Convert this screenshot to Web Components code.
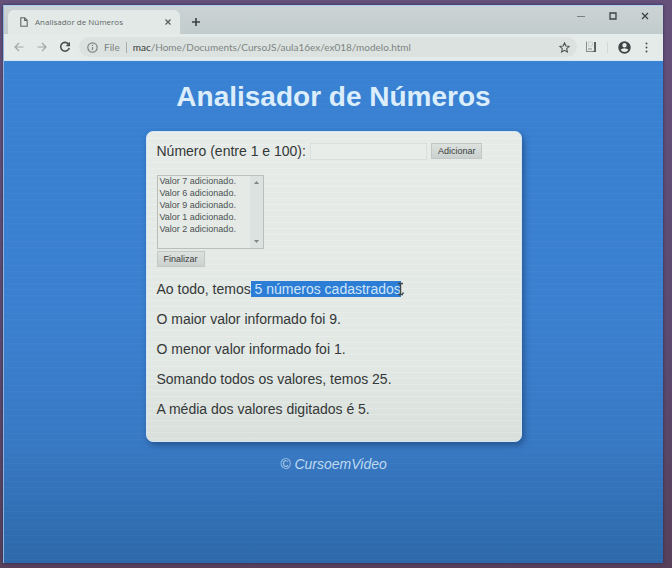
<!DOCTYPE html>
<html lang="pt-BR">
<head>
<meta charset="utf-8">
<meta name="viewport" content="width=device-width, initial-scale=1">
<title>Analisador de Números</title>
<style>
  html, body { height: 100%; margin: 0; }
  body {
    box-sizing: border-box;
    min-height: 100vh;
    padding: 5px 9px 5px 3px;
    background: linear-gradient(#66517b, #5c4a70 60%, #57405a);
    font-family: "Liberation Sans", Arial, sans-serif;
  }
</style>
</head>
<body>
<browser-window>
  <tab-strip slot="chrome"><browser-tab>Analisador de Números</browser-tab></tab-strip>
  <address-bar slot="chrome" host="mac" path="/Home/Documents/CursoJS/aula16ex/ex018/modelo.html"></address-bar>
  <number-page>
    <span slot="title">Analisador de Números</span>
    <number-form></number-form>
    <result-list></result-list>
    <span slot="footer">© CursoemVideo</span>
  </number-page>
</browser-window>

<script>
const define = (name, html) => {
  const template = document.createElement('template');
  template.innerHTML = html;
  customElements.define(name, class extends HTMLElement {
    constructor() {
      super();
      this.attachShadow({ mode: 'open' }).append(template.content.cloneNode(true));
    }
    connectedCallback() {
      for (const node of this.shadowRoot.querySelectorAll('[data-attr]')) {
        node.textContent = this.getAttribute(node.dataset.attr);
      }
    }
  });
};

define('browser-window', `
  <style>
    :host { display: flex; flex-direction: column; box-sizing: border-box; min-height: 100%;
      border-top: 1px solid #a9cdf2; border-left: 1px solid #8fb3dc;
      box-shadow: 0 0 3px #2b3052; }
    slot:not([name]) { display: flex; flex-direction: column; flex: 1; }
  </style>
  <slot name="chrome"></slot>
  <slot></slot>`);

define('tab-strip', `
  <style>
    :host { display: flex; align-items: stretch; height: 28px; background: linear-gradient(#cbd3d4, #c3cccc); }
    .tabs { display: flex; align-items: flex-end; padding-left: 4px; }
    button { border: 0; padding: 0; background: none; color: #3c4142; display: grid; place-items: center; }
    .add { width: 32px; padding-top: 4px; }
    .controls { display: flex; margin-left: auto; padding-right: 2px; height: 20px; }
    .controls button { width: 32px; }
    svg { display: block; fill: none; stroke: currentColor; }
  </style>
  <div class="tabs"><slot></slot></div>
  <button class="add" aria-label="Nova guia"><svg width="10" height="10" viewBox="0 0 10 10" stroke-width="1.6"><path d="M5 1v8M1 5h8"/></svg></button>
  <div class="controls">
    <button aria-label="Minimizar"><svg width="8" height="8" viewBox="0 0 8 8"><path d="M0 4.5h8" stroke="#798081"/></svg></button>
    <button aria-label="Maximizar"><svg width="8" height="8" viewBox="0 0 8 8" stroke-width="1.3"><path d="M1 1h6v6H1z"/></svg></button>
    <button aria-label="Fechar"><svg width="8" height="8" viewBox="0 0 8 8" stroke-width="1.3"><path d="M1 1l6 6M7 1L1 7"/></svg></button>
  </div>`);

define('browser-tab', `
  <style>
    :host { display: flex; align-items: center; box-sizing: border-box; width: 172px; height: 24px;
      padding: 0 9px 0 12px; gap: 7px; border-radius: 6px 6px 0 0; background: #e3e9e7;
      font: 8px/12px "Open Sans", "Noto Sans", sans-serif; color: #606768; }
    .name { flex: 1; white-space: nowrap; }
    button { border: 0; padding: 0; background: none; color: #555b5c; }
    svg { display: block; fill: none; stroke: currentColor; }
  </style>
  <svg width="8" height="10" viewBox="0 0 8 10" stroke-width="1.1"><path d="M.8.7h3.9l2.5 2.5v6.1H.8zM4.6.8v2.6h2.5"/></svg>
  <span class="name"><slot></slot></span>
  <button aria-label="Fechar guia"><svg width="6" height="6" viewBox="0 0 6 6" stroke-width="1.2"><path d="M.5.5l5 5M5.5.5l-5 5"/></svg></button>`);

define('address-bar', `
  <style>
    :host { display: flex; align-items: center; box-sizing: border-box; height: 27px; padding: 0 11px 0 7px;
      gap: 6px; background: #e5ebe8; border-bottom: 1px solid #d4e6f4;
      font: 10px/14px Lato, "Open Sans", sans-serif; color: #7d8583; }
    button { border: 0; padding: 0; background: none; color: #4a5051; display: grid; place-items: center; width: 16px; height: 16px; }
    button.off { color: #a1a8a8; }
    .nav { display: flex; gap: 7px; }
    .box { display: flex; align-items: center; flex: 1; height: 20px; padding: 0 5px 0 8px; border-radius: 10px; background: #dce2df; gap: 6px; min-width: 0; }
    .url { flex: 1; white-space: nowrap; overflow: hidden; }
    .sep { width: 1px; height: 11px; background: #a6aeac; }
    b { font-weight: 400; color: #343a39; }
    .tools { display: flex; align-items: center; gap: 8px; }
    .more { width: 12px; }
    svg { display: block; fill: none; stroke: currentColor; flex: none; }
    .fill { fill: currentColor; stroke: none; }
  </style>
  <div class="nav">
    <button class="off" aria-label="Voltar"><svg width="10" height="10" viewBox="0 0 10 10" stroke-width="1.2"><path d="M9.5 5H1M5 1L1 5l4 4"/></svg></button>
    <button class="off" aria-label="Avançar"><svg width="10" height="10" viewBox="0 0 10 10" stroke-width="1.2"><path d="M.5 5H9M5 1l4 4-4 4"/></svg></button>
    <button aria-label="Recarregar"><svg width="12" height="12" viewBox="0 0 12 12" stroke-width="1.6"><path d="M9.7 3.3A4.4 4.4 0 1 0 10.3 7"/><path d="M11 .8v4.4H6.6z" fill="currentColor" stroke="none"/></svg></button>
  </div>
  <div class="box">
    <svg width="11" height="11" viewBox="0 0 11 11" stroke-width="1.2"><circle cx="5.5" cy="5.5" r="4.7"/><path d="M5.5 5v3M5.5 2.7v1.2"/></svg>
    <span>File</span><span class="sep"></span>
    <span class="url"><b data-attr="host"></b><span data-attr="path"></span></span>
    <button aria-label="Favoritar"><svg width="11" height="11" viewBox="0 0 12 12" stroke-width="1.1"><path d="M6 .9l1.5 3.4 3.7.4-2.8 2.5.8 3.7L6 9l-3.2 1.9.8-3.7L.8 4.7l3.7-.4z"/></svg></button>
  </div>
  <div class="tools">
    <button aria-label="Extensão"><svg width="12" height="12" viewBox="0 0 12 12"><path d="M1.5.5v10M1 10.5h10" stroke="#868d8d"/><path d="M3.5 1h4v4h-4z" stroke="#ccd2d1"/><path d="M11 1v10H7q3-1 2-4V1z" fill="#596060" stroke="none"/><path d="M3 8h4" stroke="#868d8d"/></svg></button>
    <span class="sep" style="background:#d1d8d5"></span>
    <button aria-label="Perfil"><svg class="fill" width="13" height="13" viewBox="0 0 13 13"><path fill="#3e4445" fill-rule="evenodd" d="M6.5.3a6.2 6.2 0 1 0 0 12.4A6.2 6.2 0 0 0 6.5.3zm0 1.7a2.2 2.2 0 1 1 0 4.4 2.2 2.2 0 0 1 0-4.4zM2.5 8.800Q4 7.200 6.500 7.200t4 1.600Q9 11.100 6.500 11.100T2.500 8.800z"/></svg></button>
    <button class="more" aria-label="Menu"><svg class="fill" width="3" height="11" viewBox="0 0 3 11"><circle cx="1.5" cy="1.5" r="1"/><circle cx="1.5" cy="5.5" r="1"/><circle cx="1.5" cy="9.5" r="1"/></svg></button>
  </div>`);

define('number-page', `
  <style>
    :host { display: flex; flex-direction: column; align-items: center; flex: 1; box-sizing: border-box; padding: 19px 8px 8px;
      background: repeating-linear-gradient(#ffffff06 0 1px, transparent 1px 6px), linear-gradient(#3981d3, #3b80d0 50%, #3879c4 76%, #2d69aa); }
    h1 { margin: 0 0 18px; font-size: 28px; line-height: 33px; color: #dceefb; text-align: center; }
    main { box-sizing: border-box; width: 100%; max-width: 376px; padding: 10px; border-radius: 7px;
      background: repeating-linear-gradient(#ffffff30 0 1px, transparent 1px 6px), linear-gradient(#e6ebe8, #e2e8e4 75%, #d9dfda);
      border: 1px solid #d2e7f3; box-shadow: 2px 3px 6px #183d6ca0; }
    footer { margin-top: 14px; font-size: 14px; line-height: 17px; font-style: italic; color: #bfd9f0; }
  </style>
  <h1><slot name="title"></slot></h1>
  <main><slot></slot></main>
  <footer><slot name="footer"></slot></footer>`);

define('number-form', `
  <style>
    :host { display: block; font-size: 14px; line-height: 18px; color: #343838; }
    form { display: flex; flex-direction: column; align-items: flex-start; }
    .row { display: flex; align-items: center; gap: 4px; margin-bottom: 15px; }
    label { white-space: nowrap; }
    input { box-sizing: border-box; width: 117px; height: 17px; padding: 1px 2px; border: 1px solid #d9dfdc; background: #e8edea; font: 9px/12px "Liberation Sans", Arial, sans-serif; }
    button { box-sizing: border-box; height: 16px; padding: 0 6px; border: 1px solid #c2c8c5; background: linear-gradient(#dde2df, #cbd1ce);
      font: 9px/12px "Liberation Sans", Arial, sans-serif; color: #3c4040; }
    .list { display: flex; border: 1px solid #b9c0bc; margin-bottom: 2px; }
    select { box-sizing: border-box; width: 92px; height: 72px; margin: 0; padding: 0; border: 0; border-radius: 0; outline: 0; overflow: hidden;
      background: #e5eae7; color: #4b5150; font: 9px/12px "Liberation Sans", Arial, sans-serif; }
    option { min-height: 12px; padding: 0 2px; line-height: 12px; }
    .bar { display: flex; flex-direction: column; justify-content: space-between; width: 13px; padding: 5px 0; box-sizing: border-box; background: #dce2df; align-items: center; }
    svg { display: block; fill: #7f8684; }
  </style>
  <form onsubmit="return false">
    <div class="row">
      <label for="num">Número (entre 1 e 100):</label>
      <input id="num" type="text" inputmode="numeric">
      <button type="button">Adicionar</button>
    </div>
    <div class="list">
      <select size="6" aria-label="Valores adicionados">
        <option>Valor 7 adicionado.</option>
        <option>Valor 6 adicionado.</option>
        <option>Valor 9 adicionado.</option>
        <option>Valor 1 adicionado.</option>
        <option>Valor 2 adicionado.</option>
      </select>
      <div class="bar" aria-hidden="true">
        <svg width="5" height="3" viewBox="0 0 5 3"><path d="M0 3L2.5 0 5 3z"/></svg>
        <svg width="5" height="3" viewBox="0 0 5 3"><path d="M0 0h5L2.5 3z"/></svg>
      </div>
    </div>
    <button type="button">Finalizar</button>
  </form>`);

define('result-list', `
  <style>
    :host { display: block; padding: 13px 0; font-size: 14px; line-height: 18px; color: #343838; }
    p { margin: 0 0 12px; }
    p:last-child { margin: 0; }
    mark { position: relative; background: #2c7dd6; color: #cfe5f8; }
    .cursor { position: absolute; right: -3px; top: 1px; fill: none; stroke: #3d4549; }
  </style>
  <p>Ao todo, temos<mark> 5 números cadastrados<svg class="cursor" width="7" height="14" viewBox="0 0 7 14" aria-hidden="true"><path d="M1 1.5h5M1 12.5h5M3.5 1.5v11" stroke-width="1.4"/></svg></mark>.</p>
  <p>O maior valor informado foi 9.</p>
  <p>O menor valor informado foi 1.</p>
  <p>Somando todos os valores, temos 25.</p>
  <p>A média dos valores digitados é 5.</p>`);
</script>
</body>
</html>
